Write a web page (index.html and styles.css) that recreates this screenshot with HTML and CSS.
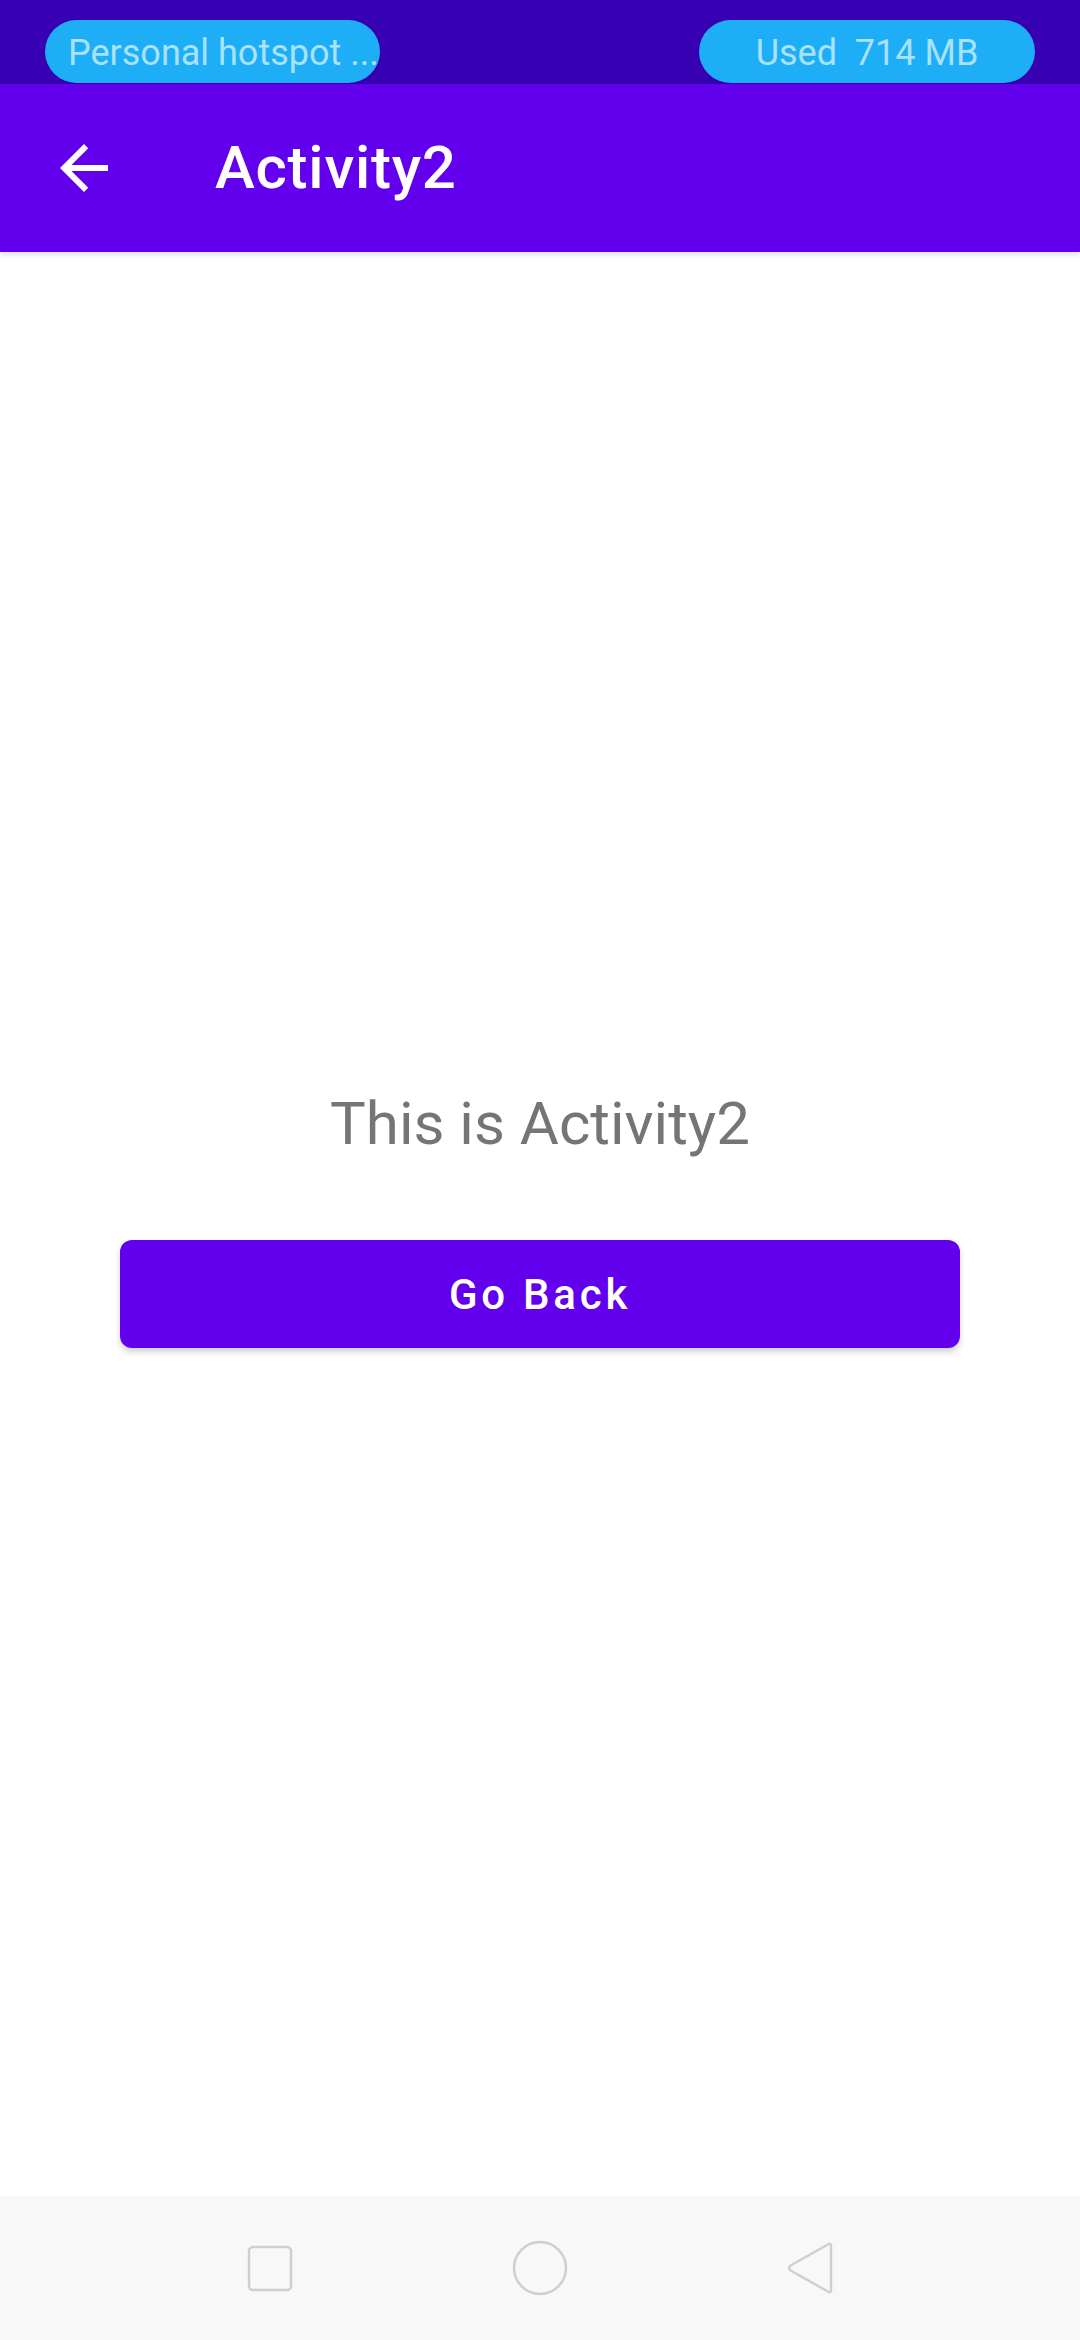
FILE: index.html
```html
<!DOCTYPE html>
<html>
<head>
<meta charset="utf-8">
<link rel="stylesheet" href="styles.css">
</head>
<body>
<div class="screen">
  <div class="status-bar">
    <div class="pill pill-left">Personal hotspot ...</div>
    <div class="pill pill-right">Used&nbsp; 714 MB</div>
  </div>
  <div class="app-bar">
    <div class="back-icon">
      <svg viewBox="0 0 24 24" width="72" height="72"><path fill="#ffffff" d="M20 11H7.83l5.59-5.59L12 4l-8 8 8 8 1.41-1.41L7.83 13H20v-2z"/></svg>
    </div>
    <div class="title">Activity2</div>
  </div>
  <div class="content">
    <div class="message">This is Activity2</div>
    <div class="button">Go Back</div>
  </div>
  <div class="nav-bar">
    <div class="nav-item">
      <svg width="46" height="47" viewBox="0 0 46 47"><rect x="2" y="2" width="42" height="43" rx="4" fill="none" stroke="#cfcfcf" stroke-width="2.5"/></svg>
    </div>
    <div class="nav-item">
      <svg width="56" height="56" viewBox="0 0 56 56"><circle cx="28" cy="28" r="26" fill="none" stroke="#cfcfcf" stroke-width="2.5"/></svg>
    </div>
    <div class="nav-item">
      <svg width="48" height="54" viewBox="0 0 48 54"><path d="M42 3.5 Q45 1.5 45 5 L45 49 Q45 52.5 42 50.5 L4.5 29.5 Q2 27 4.5 24.5 Z" fill="none" stroke="#cfcfcf" stroke-width="2.5" stroke-linejoin="round"/></svg>
    </div>
  </div>
</div>
</body>
</html>
```

FILE: styles.css
```css
html, body {
  margin: 0;
  padding: 0;
  background: #ffffff;
}

body {
  font-family: Roboto, "Noto Sans", Arial, sans-serif;
}

.screen {
  width: 1080px;
  height: 2340px;
  display: flex;
  flex-direction: column;
  overflow: hidden;
}

.status-bar {
  height: 84px;
  flex: 0 0 84px;
  background: #3700b3;
  display: flex;
  justify-content: space-between;
  align-items: flex-end;
  padding: 0 45px 1px 45px;
  box-sizing: border-box;
}

.pill {
  height: 63px;
  border-radius: 32px;
  background: #1daef6;
  color: #a8e2ff;
  font-size: 36px;
  line-height: 66px;
  box-sizing: border-box;
  white-space: nowrap;
}

.pill-left {
  width: 335px;
  padding-left: 23px;
}

.pill-right {
  width: 336px;
  text-align: center;
}

.app-bar {
  height: 168px;
  flex: 0 0 168px;
  background: #6200ee;
  display: flex;
  align-items: center;
  padding-left: 48px;
  box-sizing: border-box;
  box-shadow: 0 3px 5px rgba(0, 0, 0, 0.12);
  position: relative;
  z-index: 1;
}

.back-icon {
  width: 72px;
  height: 72px;
  display: flex;
}

.title {
  margin-left: 95px;
  color: #ffffff;
  font-size: 60px;
  font-weight: 500;
  letter-spacing: 0.75px;
  line-height: 70px;
}

.content {
  flex: 1;
  display: flex;
  flex-direction: column;
  align-items: center;
  padding-top: 837px;
  box-sizing: border-box;
}

.message {
  color: #757575;
  font-size: 60px;
  line-height: 70px;
}

.button {
  margin-top: 81px;
  width: 840px;
  height: 108px;
  border-radius: 12px;
  background: #6200ee;
  color: #ffffff;
  font-size: 42px;
  font-weight: 500;
  letter-spacing: 3.75px;
  display: flex;
  align-items: center;
  justify-content: center;
  box-shadow: 0 4px 6px rgba(0, 0, 0, 0.18);
}

.nav-bar {
  height: 144px;
  flex: 0 0 144px;
  background: #f8f8f8;
  display: flex;
  justify-content: center;
  align-items: center;
  gap: 210px;
}

.nav-item {
  width: 60px;
  height: 60px;
  display: flex;
  align-items: center;
  justify-content: center;
}
```
